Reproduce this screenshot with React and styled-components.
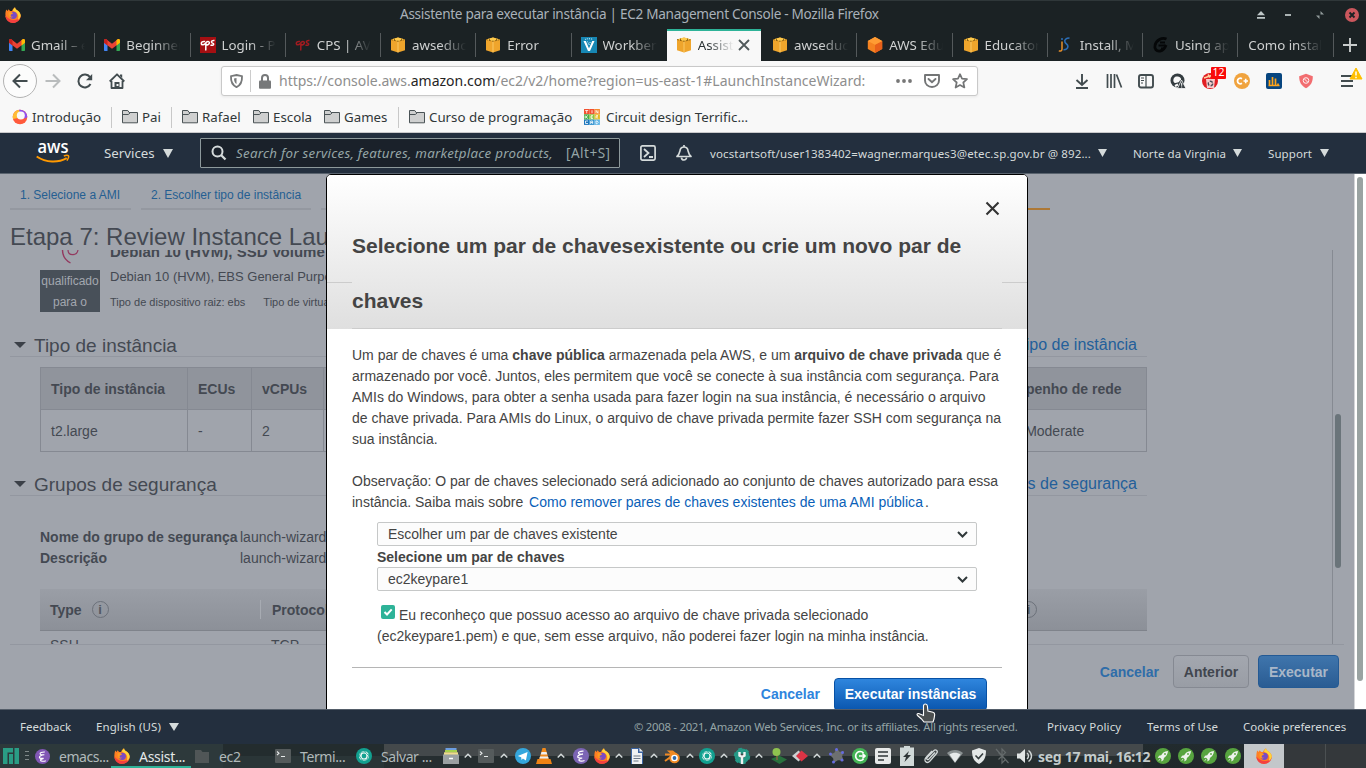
import React from "react";
import styled, { createGlobalStyle, css } from "styled-components";

const Global = createGlobalStyle`
  *, *::before, *::after { box-sizing: border-box; }
  html, body { margin: 0; padding: 0; overflow: hidden; }
  svg { display: block; overflow: visible; flex: none; }
`;

const ui = css`font-family: "Noto Sans", "Open Sans", sans-serif;`;
const sans = css`font-family: "Liberation Sans", Arial, sans-serif;`;

const Screen = styled.div`
  position: relative;
  width: 1366px;
  height: 768px;
  display: flex;
  flex-direction: column;
  overflow: hidden;
  white-space: nowrap;
  ${ui}
`;

/* Window title and tabs */
const TitleBar = styled.header`
  height: 29px;
  flex: none;
  display: flex;
  align-items: center;
  background: #1b2224;
  border-top: 1px solid #2f3739;
  padding-left: 5px;
`;
const WindowTitle = styled.h1`
  flex: none;
  margin: 0 0 0 379px;
  width: 852px;
  font-size: 13.6px;
  font-weight: 400;
  letter-spacing: -0.31px;
  line-height: 24px;
  padding-bottom: 2px;
  color: #a9b1b9;
`;
const TabStrip = styled.nav`
  height: 32px;
  flex: none;
  display: flex;
  background: #1b2224;
`;
const Tab = styled.div`
  width: 95.25px;
  height: 32px;
  flex: none;
  display: flex;
  align-items: center;
  padding: 0 0 0 ${(p) => p.$pl || 9}px;
  position: relative;
  color: ${(p) => (p.$active ? "#2b3335" : "#cfd1d1")};
  ${(p) =>
    p.$active
      ? css`width: 94.25px; margin-right: 1px; background: #f8f8f8; border-top: 2px solid #2eb398; padding-bottom: 2px;`
      : css`&::after { content: ""; position: absolute; right: 0; top: 4px; width: 1px; height: 24px; background: ${p.$sep ? "#54595b" : "transparent"}; }`}
`;
const TabLabel = styled.span`
  display: block;
  margin-left: ${(p) => (p.$bare ? 0 : 6)}px;
  width: ${(p) => p.$w || 54}px;
  overflow: hidden;
  font-size: 13.3px;
  line-height: 22px;
  mask-image: linear-gradient(90deg, #000 ${(p) => (p.$w || 54) - 26}px, transparent);
`;

/* Browser toolbar */
const NavBar = styled.div`
  height: 41px;
  flex: none;
  display: flex;
  align-items: center;
  padding-bottom: 1px;
  background: #f8f8f8;
`;
const Slot = styled.div`
  width: ${(p) => p.$w}px;
  margin-left: ${(p) => p.$ml || 0}px;
  margin-right: ${(p) => p.$mr || 0}px;
  flex: none;
  display: flex;
  align-items: center;
  justify-content: center;
  position: relative;
`;
const BackButton = styled.div`
  width: 34px;
  height: 34px;
  margin-left: 3px;
  flex: none;
  display: grid;
  place-items: center;
  border: 1px solid #b3b3b3;
  border-radius: 50%;
  background: #fcfcfc;
`;
const UrlBar = styled.div`
  width: 757px;
  height: 30px;
  margin-left: 88px;
  flex: none;
  display: flex;
  align-items: center;
  background: #fff;
  border: 1px solid #c9c9c9;
  border-radius: 3px;
  box-shadow: 0 1px 3px rgba(0, 0, 0, 0.07);
`;
const UrlDivider = styled.i`
  width: 1px;
  height: 22px;
  background: #ccc;
`;
const Url = styled.span`
  width: 611px;
  font-size: 14px;
  line-height: 18px;
  padding-bottom: 1px;
  letter-spacing: -0.005px;
  color: #8e8e8e;
  b { font-weight: 400; color: #252525; }
`;
const CounterBadge = styled.span`
  position: absolute;
  left: 17px;
  top: -6px;
  width: 15px;
  height: 12px;
  border-radius: 1px;
  background: #f90a0a;
  color: #fff;
  font-size: 10.5px;
  line-height: 11px;
  text-align: center;
`;
const WarningMark = styled.span`
  position: absolute;
  left: 25px;
  top: -5px;
`;
const ToolDivider = styled.i`
  width: 1px;
  height: 34px;
  background: #ccc;
  margin-left: 3px;
`;
const BookmarkBar = styled.div`
  height: 31px;
  flex: none;
  display: flex;
  align-items: center;
  padding-left: 12px;
  background: #f8f8f8;
  border-bottom: 1px solid #c9c9cb;
  color: #303739;
  font-size: 13.3px;
`;
const Bookmark = styled.div`
  width: ${(p) => p.$w}px;
  flex: none;
  display: flex;
  align-items: center;
  gap: ${(p) => p.$gap || 4}px;
`;
const BookmarkDivider = styled.i`
  width: 1px;
  height: 21px;
  flex: none;
  margin-right: 10px;
  margin-left: -1px;
  background: #c8c8c8;
`;

/* Console header */
const ConsoleBar = styled.header`
  height: 41px;
  flex: none;
  display: flex;
  align-items: center;
  background: #232f3e;
  border-bottom: 1px solid #59636e;
  color: #d5dbdb;
`;
const LogoBox = styled.div`
  width: 68px;
  margin-left: 36px;
  flex: none;
`;
const ConsoleItem = styled.div`
  width: ${(p) => p.$w}px;
  flex: none;
  display: flex;
  align-items: center;
  justify-content: space-between;
  margin-right: ${(p) => p.$mr || 0}px;
  font-size: ${(p) => p.$fs || 11.5}px;
  letter-spacing: ${(p) => p.$ls || 0}px;
`;
const SearchBox = styled.div`
  width: 420px;
  height: 30px;
  flex: none;
  display: flex;
  align-items: center;
  padding-left: 10px;
  background: #1a212a;
  border: 1px solid #8d999b;
  border-radius: 1px;
  color: #95a5a6;
`;
const Placeholder = styled.span`
  width: 339px;
  padding-left: 9px;
  font-style: italic;
  font-size: 13.3px;
  letter-spacing: 0.27px;
`;
const Shortcut = styled.span`
  font-size: 13.5px;
  letter-spacing: 0.5px;
`;

/* Console page behind the dialog */
const Viewport = styled.div`
  height: 535px;
  flex: none;
  display: flex;
  position: relative;
  overflow: hidden;
  ${sans}
`;
const Page = styled.main`
  width: 1354px;
  flex: none;
  display: flex;
  flex-direction: column;
  background: #a0a4ac;
  color: #444952;
`;
const PageScroll = styled.div`
  width: 12px;
  padding: 3px 0 0 2px;
  border-left: 1px solid #d4d5d8;
  background: #fff;
`;
const PageThumb = styled.div`
  width: 6px;
  height: 504px;
  border-radius: 3px;
  background: #9aa3a2;
`;
const Steps = styled.div`
  height: 36px;
  flex: none;
  display: flex;
  gap: 10px;
  padding-left: 10px;
`;
const Step = styled.div`
  width: ${(p) => p.$w}px;
  flex: none;
  height: 36px;
  padding: 13px 10px 0;
  border-bottom: 2px solid ${(p) => (p.$current ? "#ad7836" : "#9498a0")};
  color: #255f92;
  font-size: 12px;
  line-height: 16px;
`;
const PageTitle = styled.h2`
  height: 40px;
  flex: none;
  margin: 0;
  padding: 13px 0 0 10px;
  font-size: 24px;
  line-height: 28px;
  font-weight: 400;
`;
const ScrollArea = styled.section`
  height: 394px;
  flex: none;
  display: flex;
  margin-right: 10px;
  overflow: hidden;
`;
const ScrollBody = styled.div`
  width: 1333px;
  flex: none;
  padding-left: 10px;
  padding-right: 185px;
  border-right: 1px solid #868a92;
`;
const InnerThumb = styled.div`
  width: 6px;
  height: 154px;
  margin: 164px 0 0 2px;
  border-radius: 3px;
  background: #6a747a;
`;
const AmiRow = styled.div`
  height: 62px;
  display: flex;
  padding-left: 30px;
`;
const AmiBadges = styled.div`
  width: 70px;
  flex: none;
`;
const FreeTier = styled.div`
  width: 60px;
  height: 42px;
  margin-top: 20px;
  padding-top: 1px;
  background: #485059;
  color: #a3a7af;
  font-size: 12px;
  line-height: 21px;
  text-align: center;
`;
const SwirlHolder = styled.div`
  height: 0;
  padding-left: 21px;
`;
const AmiText = styled.div``;
const AmiName = styled.div`
  height: 14px;
  font-size: 15px;
  font-weight: 700;
  line-height: 18px;
  margin-top: -7px;
`;
const AmiDesc = styled.div`
  margin-top: 11px;
  font-size: 13px;
  line-height: 18px;
`;
const AmiMeta = styled.div`
  display: flex;
  gap: 18px;
  margin-top: 8px;
  font-size: 11px;
  line-height: 16px;
`;
const SectionHead = styled.div`
  height: ${(p) => p.$h}px;
  display: flex;
  align-items: flex-end;
  border-bottom: 1px solid #9397a0;
  padding-right: 10px;
`;
const SectionTitle = styled.h3`
  flex: 1;
  margin: 0 0 0 8px;
  font-size: 19px;
  line-height: 21px;
  font-weight: 400;
`;
const SectionLink = styled.a`
  font-size: 16px;
  line-height: 22px;
  color: #235f9a;
`;
const Caret = styled.i`
  margin: 0 0 8px 4px;
  border: 6px solid transparent;
  border-top: 6px solid #3b4048;
  border-bottom: 0;
`;
const TypeGrid = styled.div`
  display: grid;
  grid-template-columns: 147px 64px 72px 646px 1fr;
  margin: 10px 0 0 30px;
  height: 85px;
  border: 1px solid #858992;
  font-size: 14px;
`;
const TypeCell = styled.div`
  display: flex;
  align-items: center;
  padding-left: 10px;
  border-right: ${(p) => (p.$last ? "0" : "1px solid #858992")};
  ${(p) => p.$head && css`background: #90949c; font-weight: 700; border-bottom: 1px solid #858992;`}
`;
const GroupInfo = styled.dl`
  display: grid;
  grid-template-columns: 200px 1fr;
  margin: 31px 0 20px 30px;
  font-size: 14px;
  line-height: 21px;
  dt { font-weight: 700; }
  dd { margin: 0; }
`;
const RuleHead = styled.div`
  display: flex;
  align-items: center;
  height: 42px;
  margin: 0 0 0 30px;
  background: linear-gradient(#9a9ea6, #8c9098);
  border-bottom: 1px solid #7f838b;
  font-size: 14px;
  font-weight: 700;
`;
const RuleCell = styled.div`
  width: ${(p) => p.$w}px;
  height: 19px;
  display: flex;
  align-items: center;
  gap: ${(p) => p.$gap || 10}px;
  padding-left: ${(p) => p.$pl || 10}px;
  border-right: ${(p) => (p.$last ? "0" : "1px solid #a7abb2")};
`;
const RuleRow = styled.div`
  display: flex;
  margin-left: 40px;
  padding-top: 6px;
  font-size: 14px;
  line-height: 17px;
  span:first-child { width: 221px; }
`;
const InfoDot = styled.i`
  width: 17px;
  height: 17px;
  border: 1px solid #6c717a;
  border-radius: 50%;
  font: 700 13px/15px "Liberation Sans", sans-serif;
  text-align: center;
  color: #535861;
`;
const PageActions = styled.div`
  height: 65px;
  flex: none;
  display: flex;
  align-items: flex-start;
  justify-content: flex-end;
  margin: 0 10px;
  padding: 10px 5px 0 0;
  border-top: 1px solid #9397a0;
  font-size: 14px;
  font-weight: 700;
`;
const ActionLink = styled.a`
  line-height: 33px;
  padding-top: ${(p) => p.$pt || 0}px;
  color: ${(p) => p.$color};
  margin-right: 14px;
`;
const ActionButton = styled.button`
  ${sans}
  height: 33px;
  width: ${(p) => p.$w}px;
  padding: 1px 0 0;
  border-radius: 4px;
  font-size: 14px;
  font-weight: 700;
  ${(p) =>
    p.$primary
      ? css`margin-left: 9px; color: #a9b7c8; background: linear-gradient(#3f75ac, #2a5c93); border: 1px solid #245a94;`
      : css`color: #41464e; background: linear-gradient(#a3a7af, #999da5); border: 1px solid #858992;`}
`;

/* Dialog */
const Dialog = styled.section`
  position: absolute;
  left: 326px;
  top: 0;
  width: 702px;
  height: 560px;
  border: 1px solid #000;
  border-radius: 5px 5px 0 0;
  background: #fff;
  overflow: hidden;
  color: #444;
  font-size: 14px;
  line-height: 21px;
`;
const DialogHead = styled.div`
  height: 154px;
  padding: 27px 25px 0;
  background: linear-gradient(90deg, #ccc 25px, transparent 25px, transparent 675px, #ccc 675px) 0 107px / 100% 1px no-repeat,
    linear-gradient(#fff, #dfdfdf);
`;
const CloseRow = styled.div`
  height: 16px;
  display: flex;
  justify-content: flex-end;
  padding-right: 3px;
`;
const DialogTitle = styled.h2`
  margin: 0;
  height: 111px;
  font-size: 21px;
  line-height: 55px;
  font-weight: 700;
  border-bottom: 1px solid #ccc;
`;
const DialogBody = styled.div`
  padding: 16px 25px 0;
`;
const Para = styled.p`
  margin: 0;
  height: ${(p) => p.$h}px;
`;
const TextLink = styled.a`
  color: #0a5fb8;
  margin: 0 2px;
  letter-spacing: 0.015px;
`;
const Form = styled.div`
  width: 600px;
  margin: 9px 0 0 25px;
`;
const Select = styled.div`
  height: 24px;
  display: flex;
  align-items: center;
  justify-content: space-between;
  padding: 0 8px 0 10px;
  background: #fcfcfc;
  border: 1px solid #c6c8c8;
  border-radius: 2px;
`;
const FieldLabel = styled.div`
  height: 21px;
  padding-top: 1px;
  font-weight: 700;
`;
const Ack = styled.div`
  margin-top: 14px;
`;
const AckLine = styled.div`
  display: flex;
  align-items: flex-start;
`;
const Check = styled.span`
  width: 14px;
  height: 14px;
  margin: 0 4px;
  display: grid;
  place-items: center;
  border-radius: 2px;
  background: #2eb398;
`;
const DialogActions = styled.div`
  display: flex;
  margin-top: 20px;
  padding: 10px 15px 0 0;
  justify-content: flex-end;
  border-top: 1px solid #b5b5b5;
  font-weight: 700;
`;
const LaunchButton = styled.button`
  ${sans}
  width: 153px;
  height: 33px;
  padding: 0 0 2px;
  color: #fff;
  font-size: 14px;
  font-weight: 700;
  border: 1px solid #0751a5;
  border-radius: 4px;
  background: linear-gradient(#2f86de, #0a56ae);
`;

/* Console footer and desktop panel */
const Footer = styled.footer`
  height: 35px;
  flex: none;
  display: flex;
  align-items: center;
  padding: 0 0 0 20px;
  background: #232f3e;
  border-top: 1px solid #545d69;
  color: #d5dbdb;
`;
const FootItem = styled.span`
  width: ${(p) => p.$w}px;
  flex: none;
  display: flex;
  align-items: center;
  gap: 8px;
  line-height: 16px;
  padding-bottom: 1px;
  font-size: ${(p) => p.$fs || 11.5}px;
  letter-spacing: ${(p) => p.$ls || 0}px;
  color: ${(p) => p.$color || "inherit"};
`;
const Panel = styled.div`
  height: 24px;
  flex: none;
  display: flex;
  align-items: center;
  background:
    linear-gradient(#34383b, #34383b) 1284px 0 / 82px 24px no-repeat,
    linear-gradient(#222b2e, #20282a) 1143px 0 / 101px 24px no-repeat,
    linear-gradient(#44494b 12px, #262e30 12px) 384px 0 / 759px 24px no-repeat,
    linear-gradient(#232c2e 12px, #2a3537 12px) 223px 0 / 161px 24px no-repeat,
    #2d393b;
`;
const Task = styled.div`
  width: ${(p) => p.$w}px;
  height: 24px;
  flex: none;
  display: flex;
  align-items: center;
  padding-left: ${(p) => p.$pl || 0}px;
  color: ${(p) => (p.$active ? "#e4e8e8" : "#b1b9ba")};
  ${(p) => p.$active && css`box-shadow: inset 0 -2px #2eb398;`}
`;
const TaskName = styled.span`
  margin-left: ${(p) => p.$ml || 7}px;
  padding-top: 2px;
  font-size: 14px;
  line-height: 22px;
  letter-spacing: ${(p) => p.$ls || 0}px;
`;
const Clock = styled.span`
  width: 117px;
  padding: 1px 0 0 4px;
  flex: none;
  font-size: 14px;
  font-weight: 700;
  letter-spacing: -0.3px;
  color: #c3cbcb;
`;
const Desktop = styled.div`
  width: ${(p) => p.$w}px;
  height: 24px;
  flex: none;
  display: grid;
  place-items: center;
  background: ${(p) => (p.$active ? "#c3c7ca" : "transparent")};
  border-right: ${(p) => (p.$active ? "0" : "1px solid #4b5052")};
`;
const Pointer = styled.div`
  position: absolute;
  left: 916px;
  top: 703px;
`;

/* Icons */
const Svg = ({ s = 16, w, h, vb = "0 0 16 16", children, ...rest }) => (
  <svg width={w || s} height={h || s} viewBox={vb} fill="none" {...rest}>{children}</svg>
);
const Firefox = ({ s = 16 }) => (
  <Svg s={s}>
    <path d="M1.200 2.600 2.600 4l1-1.800 1.500 1.900L7 4l1-2 2-1.800c.3 1.300.6 1.800 1.400 2.500 2 .9 4.300 3 4.300 6A7.700 7.700 0 1 1 .4 7c.1-1.600.3-2.600.8-4.400z" fill="#ff7f22" />
    <path d="M.4 8.500C.5 13 4 16 8 16s7.500-3 7.700-7.300c-1 2.400-3.500 4.200-6.600 4.200C5 12.900 3 11.500.4 8.500z" fill="#f4403f" />
    <path d="M10 .2c.3 1.300.6 1.800 1.400 2.500 2.800 1.300 4.300 3.800 4.300 6.200-.5 2-1.500 3.300-3 4 1-2.200 1-5-.7-6.700C10.300 4.500 8.500 4.500 8 3.600 8.200 2 9.200 1 10 .2z" fill="#ffd53a" />
    <circle cx="8.300" cy="8.300" r="3.600" fill="#7a4bc4" />
    <path d="M3.500 5.500c1.500-.8 3.300-.3 4.700.7-1 .9-2.300.9-2.500 2-.2 1.300 1 1.700 2.300 1.400-1 1.300-3.300 1.100-4.100-.5-.4-1-.5-2-.4-3.600z" fill="#ff9a1f" />
  </Svg>
);
const Gmail = () => (
  <Svg><path d="M0 3.500V13c0 .7.400 1 1 1h2.500V7z" fill="#4285f4" /><path d="M16 3.500V13c0 .7-.4 1-1 1h-2.500V7z" fill="#34a853" /><path d="M0 3.500C0 2 1.500 1.500 2.600 2.400L8 6.700l5.400-4.300C14.500 1.500 16 2 16 3.500v2.200L8 11.800 0 5.700z" fill="#ea4335" /><path d="M12.500 3.100l.9-.7C14.500 1.500 16 2 16 3.500v2.200l-3.500 2.700z" fill="#fbbc04" /><path d="M0 3.500v2.200l3.500 2.700V3.100l-.9-.7C1.500 1.500 0 2 0 3.500z" fill="#c5221f" /></Svg>
);
const Cps = ({ boxed }) => (
  <Svg>
    {boxed && <rect width="16" height="16" fill="#a50f12" />}
    <path d="M5 4.500C2.500 4 1.200 5.200 1.300 6.600c.1 1.600 2.500 1.500 4-.2M6 5c-.4 2 0 5-.3 8.500M6 5.500c2-1.800 3.800-.8 3.300.8S7 8.200 6.200 7.500M14.500 3.600c-2-.4-3.400.6-3 1.700.4 1 2.300.8 2.200 2-.1 1.300-2.100 1.300-3.200.5" stroke={boxed ? "#fff" : "#a21b20"} strokeWidth="1.500" />
  </Svg>
);
const Cube = () => (
  <Svg><path d="M1 2.500 8 .6l7 1.900v10.800L8 15.500l-7-2.200z" fill="#efa52c" /><path d="M1 2.500 8 .6l7 1.900-7 1.800z" fill="#ffcb4c" /><path d="M8 4.300v11.200" stroke="#ffd374" strokeWidth=".8" /><path d="M1 2.500l7 1.800 7-1.800M4.500 1.500v2M11.500 1.500v2" stroke="#6f4505" strokeWidth=".7" strokeDasharray="2 1" /></Svg>
);
const Hex = () => (
  <Svg><path d="M8 0l7.200 4v8L8 16 .8 12V4z" fill="#f58220" /><path d="M8 7.800 15.200 4v8L8 16z" fill="#e8601a" /><path d="M8 0l7.200 4L8 7.800.8 4z" fill="#ff9c33" /></Svg>
);
const Voc = () => (
  <Svg><rect width="16" height="16" fill="#1787b4" /><path d="M2.500 4h2.300L8 11.500 11.200 4h2.300L9 14H7z" fill="#fff" /><path d="M4 2.500c2-1 6-1 8 0M6.500 4.500 8 8l1.500-3.500" stroke="#d8eff8" strokeDasharray="1 1" /></Svg>
);
const Js = () => (
  <Svg><path d="M4 4.500V12c0 1.800-1.200 2.300-3.200 2" stroke="#e8902a" strokeWidth="1.500" /><circle cx="4" cy="2" r="1" fill="#2c6fb8" /><path d="M11.500 1C8 1 6 3 7 5.200c.8 1.800 3 2.200 2.900 4.300C9.800 11.500 8 13 5.500 12.800" stroke="#2c6fb8" strokeWidth="1.600" /></Svg>
);
const Swoosh = () => (
  <Svg><path d="M13.500 2C9 0 3 3 2 8.500c-.8 3.500 1.500 6 5 5.500 3-.5 5-3 6-6" stroke="#050708" strokeWidth="2.800" /><path d="M5.500 8.500h7M7 5.500h5M8 11.500h4" stroke="#050708" strokeWidth="2" /></Svg>
);
const Folder = () => (
  <Svg><path d="M.5 13.800V1.500h5.300l1.300 2h8.400v10.300z" fill="#cfd0d0" stroke="#4a5356" /><path d="M.5 5.500h5.800L8 4" stroke="#4a5356" /></Svg>
);
const Tinker = () => {
  const tiles = ["#f25130", "#f25130", "#f78a2d", "#47ae45", "#8cc63f", "#e5b91e", "#1c75bc", "#2d8fce", "#5fb4e6"];
  return (
    <Svg>
      {tiles.map((c, i) => <rect key={i} x={(i % 3) * 5.3} y={Math.floor(i / 3) * 5.3} width="5.300" height="5.300" fill={c} />)}
      <path d="M1.200 1.500h3M2.700 1.500v2.800M8 1.200v3M12 4.300v-3l2 3v-3M1.200 6.500v3M3.800 6.500l-2 1.500 2 1.500M9 6.700H7v2.700h2M7 8h1.500M12 9.500V6.700h2L12.500 8l1.700 1.500M4 12H1.500v2.500H4M6.700 15v-3h2v3M6.700 13.500h2M12 12v2.700h1.200l1-1.300-1-1.400z" stroke="#fff" strokeWidth=".8" />
    </Svg>
  );
};
const Triangle = ({ w = 10, h = 8 }) => <Svg w={w} h={h} vb="0 0 10 8" preserveAspectRatio="none"><path d="M0 0h10L5 8z" fill="#d5dbdb" /></Svg>;
const Up = () => <Svg w={8} h={6} vb="0 0 8 6"><path d="M.7 4.500 4 1.300l3.300 3.200" stroke="#d4dada" strokeWidth="1.500" /></Svg>;
const Emacs = ({ s = 16, color = "#7c65b5" }) => (
  <Svg s={s}><circle cx="8" cy="8" r="8" fill={color} /><path d="M10.500 3.200C7 3 5 4.200 5.500 5.300c.4 1 2.500 1 4.500.9-3 .3-5.500 1.300-5.300 2.700.2 1.300 3 1.200 4.500 1.100-2 .5-3.500 1-3.300 2 .3 1.200 3.300 1.500 5.600.5" stroke="#fff" strokeWidth="1.200" /></Svg>
);
const Term = () => (
  <Svg><rect y="1" width="16" height="14" rx="1" fill="#555b5c" /><path d="M2 3.500 4 5.300 2 7M6 8.500h4" stroke="#e6e9e9" strokeWidth="1.100" /></Svg>
);
const Shutter = () => (
  <Svg><circle cx="8" cy="8" r="8" fill="#12a190" /><circle cx="8" cy="8" r="3.700" stroke="#e9f6f4" strokeWidth="2.600" /><path d="M8 2.500 12 7M13 6l-2 5.500M12 12H6M6.500 13 4 8.500M3 9l2-5.200M4.500 4H10" stroke="#12a190" strokeWidth=".8" /></Svg>
);
const Rocket = () => (
  <Svg><circle cx="8" cy="8" r="8" fill="#57a43f" /><path d="M13 3C9 3.300 7 5.500 6.200 7.300L4 7.800 2.800 10l2.300-.3 1.500 1.500L6.300 13.400 8.500 12l.4-2C11 8.500 12.800 6.500 13 3zM4.700 11 3 13.200 5.300 11.800z" fill="#eef3ed" /><circle cx="10" cy="6" r=".9" fill="#57a43f" /></Svg>
);

const tabs = [
  ["Gmail – e", <Gmail />], ["Beginner", <Gmail />], ["Login - P", <Cps boxed />], ["CPS | AVA", <Cps />],
  ["awseduca", <Cube />], ["Error", <Cube />], ["Workbenc", <Voc />], ["Assiste", <Cube />], ["awseduca", <Cube />],
  ["AWS Educ", <Hex />], ["Educator", <Cube />], ["Install, M", <Js />], ["Using app", <Swoosh />], ["Como instalar", null],
];

const CloseTab = styled.span`
  margin-left: 5px;
`;

function Browser() {
  return (
    <>
      <TitleBar>
        <Firefox />
        <WindowTitle>Assistente para executar instância | EC2 Management Console - Mozilla Firefox</WindowTitle>
        <Slot $w={18}><Svg w={8} h={8} vb="0 0 8 8"><path d="M4 0l4 4.300H0zM0 6h8v1.700H0z" fill="#bfc8c8" /></Svg></Slot>
        <Slot $w={36}><Svg w={6} h={2} vb="0 0 6 2"><path d="M0 0h6v2H0z" fill="#aab2b2" /></Svg></Slot>
        <Slot $w={28}><Svg w={8} h={8} vb="0 0 8 8"><path d="M4.500 0v3.500H8zM3.500 8V4.500H0z" fill="#929b9b" /></Svg></Slot>
        <Slot $w={36}><Svg s={14} vb="0 0 14 14"><circle cx="7" cy="7" r="7" fill="#cb575d" /><path d="M4.500 4.500l5 5m0-5-5 5" stroke="#1b2224" strokeWidth="1.900" /></Svg></Slot>
      </TitleBar>
      <TabStrip>
        {tabs.map(([name, icon], i) => (
          <Tab key={i} $active={i === 7} $sep={i !== 6} $pl={i > 7 ? 10 : 9}>
            {icon}
            <TabLabel $bare={!icon} $w={i === 13 ? 74 : i === 7 ? 36 : 54}>{name}</TabLabel>
            {i === 7 && <CloseTab><Svg s={10} vb="0 0 10 10"><path d="M0 0l10 10M10 0 0 10" stroke="#50595b" strokeWidth="1.800" /></Svg></CloseTab>}
          </Tab>
        ))}
        <Slot $w={32}><Svg s={14} vb="0 0 14 14"><path d="M7 0v14M0 7h14" stroke="#c9cccc" strokeWidth="1.900" /></Svg></Slot>
      </TabStrip>
      <NavBar>
        <BackButton><Svg><path d="M15.500 8H1.500M8 1.500 1.500 8 8 14.500" stroke="#424c4f" strokeWidth="2" /></Svg></BackButton>
        <Slot $w={32}><Svg><path d="M.5 8h14M8 1.500 14.500 8 8 14.500" stroke="#b9bcbd" strokeWidth="2" /></Svg></Slot>
        <Slot $w={32}><Svg><path d="M13 4.200A6.400 6.400 0 1 0 13.500 11" stroke="#424c4f" strokeWidth="2" /><path d="M15.200 1v6.300H9z" fill="#424c4f" /></Svg></Slot>
        <Slot $w={32}><Svg><path d="M.7 8.500 8 1.300l7.300 7.200M2.500 8v7h11V8" stroke="#424c4f" strokeWidth="1.800" strokeLinejoin="round" /><path d="M5.500 15V9h5v6zM11 1.500h2.200V5L11 3z" fill="#424c4f" /><path d="M7.500 11h2v2h-2z" fill="#f8f8f8" /></Svg></Slot>
        <UrlBar>
          <Slot $w={28}><Svg w={13} h={14} vb="0 0 13 14"><path d="M6.500 1 12 2.200c.3 5.500-1.500 9-5.500 10.900C2.500 11.200.7 7.700 1 2.200z" stroke="#77797a" strokeWidth="1.800" /><path d="M6.500 4v6C4.500 8.800 4 6.700 4 4.500z" fill="#77797a" /></Svg></Slot>
          <UrlDivider />
          <Slot $w={28}><Svg w={12} h={15} vb="0 0 12 15"><path d="M3 7V4a3 3 0 0 1 6 0v3" stroke="#77797a" strokeWidth="2" /><rect y="6.500" width="12" height="8.200" rx="1" fill="#77797a" /></Svg></Slot>
          <Url>https://console.aws.<b>amazon.com</b>/ec2/v2/home?region=us-east-1#LaunchInstanceWizard:</Url>
          <Slot $w={34}><Svg w={16} h={4} vb="0 0 16 4"><circle cx="2" cy="2" r="1.900" fill="#777" /><circle cx="8" cy="2" r="1.900" fill="#777" /><circle cx="14" cy="2" r="1.900" fill="#777" /></Svg></Slot>
          <Slot $w={22}><Svg><path d="M1 2h14v5.500a7 6.500 0 0 1-14 0z" stroke="#737576" strokeWidth="1.900" strokeLinejoin="round" /><path d="M4.500 6 8 9.300 11.500 6" stroke="#737576" strokeWidth="1.900" strokeLinecap="round" /></Svg></Slot>
          <Slot $w={34}><Svg><path d="M8 1.200l2 4.500 5 .5-3.700 3.300 1.100 5L8 12l-4.400 2.500 1.100-5L1 6.200l5-.5z" stroke="#737576" strokeWidth="1.700" strokeLinejoin="round" /></Svg></Slot>
        </UrlBar>
        <Slot $w={32} $ml={88}><Svg><path d="M8 1v11M2.500 7 8 12l5.500-5M2 15h12" stroke="#424c4f" strokeWidth="1.900" /></Svg></Slot>
        <Slot $w={32}><Svg><path d="M1.500 1v14M5 1v14M8.500 1v14M10.500 1.500l5 13" stroke="#424c4f" strokeWidth="1.700" /></Svg></Slot>
        <Slot $w={32}><Svg><rect x="1" y="2" width="14" height="12.500" rx="2" stroke="#424c4f" strokeWidth="1.900" /><path d="M8 2v12.500M3 5h3M3 7.500h3M3 10h2" stroke="#424c4f" strokeWidth="1.200" /></Svg></Slot>
        <Slot $w={32}><Svg><circle cx="7.500" cy="7.500" r="7" fill="#343c40" /><path d="M3.500 8.500c-.5-3 1-5 3.500-5s4.500 1.500 4 3.500c-2 .5-1.500 2.500-3.500 2.500C6 9.500 5 11 3.500 8.500z" fill="#f8f8f8" /><path d="M5 13l3-1.500" stroke="#f8f8f8" strokeWidth="2" /><path d="M11.500 7 16 15.500H7.500z" fill="#343c40" stroke="#f8f8f8" strokeWidth=".8" /><path d="M11.700 9.800v3M11.700 13.500v1" stroke="#fff" /></Svg></Slot>
        <Slot $w={32}><Svg><circle cx="8" cy="8" r="8" fill="#e11e23" /><path d="M2 5l9-3M6 1.500l2 3" stroke="#ffd4a0" strokeWidth="1.500" /><path d="M4 6h9l-1 9H5z" fill="#f7caca" /><circle cx="8.500" cy="10.500" r="2.200" stroke="#4d4d58" strokeWidth="1.400" strokeDasharray="3 1.300" /></Svg><CounterBadge>12</CounterBadge></Slot>
        <Slot $w={32}><Svg><circle cx="8" cy="8" r="8" fill="#f0a33e" /><path d="M8 5.700C6 4.500 3.500 5.700 3.500 8S6 11.500 8 10.300" stroke="#fff" strokeWidth="1.800" /><path d="M9.500 8h4.500M11.700 5.700v4.600" stroke="#fff" strokeWidth="1.600" /></Svg></Slot>
        <Slot $w={32}><Svg><rect width="16" height="16" rx="2" fill="#07457f" /><path d="M3.500 12V7M6.500 12V4M9.500 12V5.500M12 12v-1.500M2.500 12.500h11" stroke="#ffa51c" strokeWidth="1.700" /></Svg></Slot>
        <Slot $w={32}><Svg><path d="M8 .8l6.800 2.500c.2 5.500-2 9.500-6.800 12C3.200 12.800 1 8.800 1.200 3.300z" fill="#f26d70" /><circle cx="8" cy="7.500" r="2.800" stroke="#fff" strokeWidth=".9" /><path d="M6.500 6l3 3" stroke="#fff" strokeWidth=".9" /></Svg></Slot>
        <ToolDivider />
        <Slot $w={44}><Svg><path d="M2 3h12M2 8h12M2 13h12" stroke="#424c4f" strokeWidth="1.900" /></Svg>
          <WarningMark><Svg s={12} vb="0 0 12 12"><path d="M6 0l6 11H0z" fill="#ffbf00" stroke="#ffbf00" strokeLinejoin="round" /><path d="M6 3.500V7.500M6 8.800v1.500" stroke="#fff" strokeWidth="1.500" /></Svg></WarningMark>
        </Slot>
      </NavBar>
      <BookmarkBar>
        <Bookmark $w={100}><Svg><circle cx="8" cy="8" r="7.300" fill="#ff5a3c" /><path d="M1 10a7.300 7.300 0 0 1 6-9.200L10 4 6 9z" fill="#ffbd35" /><path d="M7 .8a7.300 7.300 0 0 1 8.300 7c-2 3-5 2-7.300-4z" fill="#8f4ff0" /><circle cx="8.800" cy="6.500" r="4" fill="#f8f8f8" /></Svg>Introdução</Bookmark>
        <BookmarkDivider />
        <Bookmark $w={50}><Folder />Pai</Bookmark>
        <BookmarkDivider />
        <Bookmark $w={71}><Folder />Rafael</Bookmark>
        <Bookmark $w={71}><Folder />Escola</Bookmark>
        <Bookmark $w={75}><Folder />Games</Bookmark>
        <BookmarkDivider />
        <Bookmark $w={175}><Folder />Curso de programação</Bookmark>
        <Bookmark $w={180} $gap={6}><Tinker />Circuit design Terrific...</Bookmark>
      </BookmarkBar>
    </>
  );
}

function ConsoleHeader() {
  return (
    <ConsoleBar>
      <LogoBox>
        <Svg w={34} h={22} vb="0 0 34 22">
          <text x="1.500" y="11" textLength="31" lengthAdjust="spacingAndGlyphs" fontFamily="Open Sans, sans-serif" fontSize="18.500" fontWeight="600" fill="#fff">aws</text>
          <path d="M.7 14.500c9.500 6.500 21.500 6.500 30 1.700" stroke="#ff9900" strokeWidth="2" />
          <path d="M27.800 14c2-.7 4-.8 4.600-.2.500.7-.2 3-1.500 4.800" stroke="#ff9900" strokeWidth="1.500" />
        </Svg>
      </LogoBox>
      <ConsoleItem $w={69} $mr={27} $fs={13.3}>Services<Triangle w={10} h={9} /></ConsoleItem>
      <SearchBox>
        <Svg><circle cx="6.500" cy="6.500" r="5" stroke="#d5dbdb" strokeWidth="2" /><path d="M10 10l4.500 4.500" stroke="#d5dbdb" strokeWidth="2.300" /></Svg>
        <Placeholder>Search for services, features, marketplace products,</Placeholder>
        <Shortcut>[Alt+S]</Shortcut>
      </SearchBox>
      <Slot $w={56}><Svg><rect x=".9" y=".9" width="14.200" height="14.200" rx="1.500" stroke="#d5dbdb" strokeWidth="1.700" /><path d="M4 4l4.500 4L4 12M9 12h4" stroke="#d5dbdb" strokeWidth="1.800" /></Svg></Slot>
      <Slot $w={16} $mr={18}><Svg><path d="M8 0v2M1 11.500C3.500 9.500 3.500 7 4 5.500 4.500 3 6 2 8 2s3.500 1 4 3.500c.5 1.500.5 4 3 6z" stroke="#d5dbdb" strokeWidth="1.700" strokeLinejoin="round" /><path d="M5.500 12.500a2.500 2.500 0 0 0 5 0" stroke="#d5dbdb" strokeWidth="1.700" /></Svg></Slot>
      <ConsoleItem $w={397} $mr={26} $ls={0.135}>vocstartsoft/user1383402=wagner.marques3@etec.sp.gov.br @ 892...<Triangle w={9} h={8} /></ConsoleItem>
      <ConsoleItem $w={109} $mr={26} $ls={0.08}>Norte da Virgínia<Triangle w={9} h={8} /></ConsoleItem>
      <ConsoleItem $w={61} $ls={0.1}>Support<Triangle w={9} h={8} /></ConsoleItem>
    </ConsoleBar>
  );
}

function WizardPage() {
  return (
    <Page>
      <Steps><Step $w={121}>1. Selecione a AMI</Step><Step $w={170}>2. Escolher tipo de instância</Step><Step $w={300} /><Step $w={419} $current /></Steps>
      <PageTitle>Etapa 7: Review Instance Launch</PageTitle>
      <ScrollArea>
        <ScrollBody>
          <AmiRow>
            <AmiBadges>
              <SwirlHolder><Svg w={20} h={13} vb="0 0 20 13"><path d="M1.500 0c0 5 2.500 10 8 13" stroke="#93395f" strokeWidth="1.400" /><path d="M7 0c0 6 9 6.500 10 0" stroke="#93395f" strokeWidth="1.200" /></Svg></SwirlHolder>
              <FreeTier>qualificado<br />para o</FreeTier>
            </AmiBadges>
            <AmiText>
              <AmiName>Debian 10 (HVM), SSD Volume Type</AmiName>
              <AmiDesc>Debian 10 (HVM), EBS General Purpose (SSD) Volume Type</AmiDesc>
              <AmiMeta><span>Tipo de dispositivo raiz: ebs</span><span>Tipo de virtualização: hvm</span></AmiMeta>
            </AmiText>
          </AmiRow>
          <SectionHead $h={45}><Caret /><SectionTitle>Tipo de instância</SectionTitle><SectionLink>Editar tipo de instância</SectionLink></SectionHead>
          <TypeGrid>
            <TypeCell $head>Tipo de instância</TypeCell><TypeCell $head>ECUs</TypeCell><TypeCell $head>vCPUs</TypeCell><TypeCell $head>Memória (GiB)</TypeCell><TypeCell $head $last>Desempenho de rede</TypeCell>
            <TypeCell>t2.large</TypeCell><TypeCell>-</TypeCell><TypeCell>2</TypeCell><TypeCell>8</TypeCell><TypeCell $last>Low to Moderate</TypeCell>
          </TypeGrid>
          <SectionHead $h={44}><Caret /><SectionTitle>Grupos de segurança</SectionTitle><SectionLink>Editar grupos de segurança</SectionLink></SectionHead>
          <GroupInfo><dt>Nome do grupo de segurança</dt><dd>launch-wizard-1</dd><dt>Descrição</dt><dd>launch-wizard-1 created</dd></GroupInfo>
          <RuleHead>
            <RuleCell $w={221}>Type <InfoDot>i</InfoDot></RuleCell>
            <RuleCell $w={641} $pl={11}>Protocol <InfoDot>i</InfoDot></RuleCell>
            <RuleCell $w={245} $last $pl={40} $gap={1}>Description <InfoDot>i</InfoDot></RuleCell>
          </RuleHead>
          <RuleRow><span>SSH</span><span>TCP</span></RuleRow>
        </ScrollBody>
        <InnerThumb />
      </ScrollArea>
      <PageActions><ActionLink $pt={1} $color="#2f6da9">Cancelar</ActionLink><ActionButton $w={76}>Anterior</ActionButton><ActionButton $w={81} $primary>Executar</ActionButton></PageActions>
    </Page>
  );
}

const Arrow = () => <Svg w={11} h={7} vb="0 0 11 7"><path d="M1 1l4.500 4.500L10 1" stroke="#30383a" strokeWidth="2" /></Svg>;

function KeyPairDialog() {
  return (
    <Dialog>
      <DialogHead>
        <CloseRow><Svg s={13} vb="0 0 13 13"><path d="M.5.5l12 12m0-12-12 12" stroke="#333" strokeWidth="2.100" /></Svg></CloseRow>
        <DialogTitle>Selecione um par de chavesexistente ou crie um novo par de<br />chaves</DialogTitle>
      </DialogHead>
      <DialogBody>
        <Para $h={126}>
          Um par de chaves é uma <b>chave pública</b> armazenada pela AWS, e um <b>arquivo de chave privada</b> que é<br />
          armazenado por você. Juntos, eles permitem que você se conecte à sua instância com segurança. Para<br />
          AMIs do Windows, para obter a senha usada para fazer login na sua instância, é necessário o arquivo<br />
          de chave privada. Para AMIs do Linux, o arquivo de chave privada permite fazer SSH com segurança na<br />
          sua instância.
        </Para>
        <Para $h={42}>
          Observação: O par de chaves selecionado será adicionado ao conjunto de chaves autorizado para essa<br />
          instância. Saiba mais sobre <TextLink>Como remover pares de chaves existentes de uma AMI pública</TextLink>.
        </Para>
        <Form>
          <Select>Escolher um par de chaves existente<Arrow /></Select>
          <FieldLabel>Selecione um par de chaves</FieldLabel>
          <Select>ec2keypare1<Arrow /></Select>
          <Ack>
            <AckLine><Check><Svg s={10} vb="0 0 10 10"><path d="M1.500 5 4 7.500 8.700 2.300" stroke="#fff" strokeWidth="2" /></Svg></Check>Eu reconheço que possuo acesso ao arquivo de chave privada selecionado</AckLine>
            <AckLine>(ec2keypare1.pem) e que, sem esse arquivo, não poderei fazer login na minha instância.</AckLine>
          </Ack>
        </Form>
        <DialogActions><ActionLink $color="#2e84dd">Cancelar</ActionLink><LaunchButton>Executar instâncias</LaunchButton></DialogActions>
      </DialogBody>
    </Dialog>
  );
}

function ConsoleFooter() {
  return (
    <Footer>
      <FootItem $w={76}>Feedback</FootItem>
      <FootItem $w={538} $ls={0.1}>English (US)<Triangle /></FootItem>
      <FootItem $w={413} $color="#95a5a6" $fs={11.3} $ls={-0.25}>© 2008 - 2021, Amazon Web Services, Inc. or its affiliates. All rights reserved.</FootItem>
      <FootItem $w={100} $ls={0.12}>Privacy Policy</FootItem>
      <FootItem $w={96} $ls={0.05}>Terms of Use</FootItem>
      <FootItem $w={110} $ls={-0.04}>Cookie preferences</FootItem>
    </Footer>
  );
}

function DesktopPanel() {
  return (
    <Panel>
      <Slot $w={22}><Svg><path d="M0 0h10v4.500H4.500V16H0zM6 6h4v10H6zM11.500 0H16v16h-4.500z" fill="#2a9d85" /></Svg></Slot>
      <Slot $w={10}><Svg w={4} h={10} vb="0 0 4 10"><path d="M0 .5h4M0 4.500h4M0 8.500h4" stroke="#7f8888" /></Svg></Slot>
      <Task $w={79}><Slot $w={20}><Emacs s={15} color="#8157b5" /></Slot><TaskName $ls={-0.45}>emacs...</TaskName></Task>
      <Task $w={80} $active><Slot $w={22}><Firefox /></Slot><TaskName $ml={6} $ls={-0.3}>Assist...</TaskName></Task>
      <Task $w={82} $pl={1}><Slot $w={20}><Svg w={14} h={13} vb="0 0 14 13"><path d="M0 0h6l1.500 2H14v11H0z" fill="#505657" /></Svg></Slot><TaskName $ls={-0.3}>ec2</TaskName></Task>
      <Task $w={81}><Slot $w={20}><Term /></Slot><TaskName $ls={-0.4}>Termi...</TaskName></Task>
      <Task $w={87}><Slot $w={20}><Shutter /></Slot><TaskName $ls={-0.4}>Salvar ...</TaskName></Task>
      <Slot $w={20}><Svg><path d="M2.500 0h11v2h-11z" fill="#6d9ee0" /><path d="M2 2h12v2.500H2z" fill="#a6d14d" /><path d="M1 4.300h14V7H1z" fill="#f0dc8c" /><path d="M0 6.500h16V16H0z" fill="#9ba0a2" /><path d="M6 10.500h4" stroke="#fff" strokeWidth="1.500" /></Svg></Slot>
      <Slot $w={14}><Up /></Slot>
      <Slot $w={22}><Term /></Slot>
      <Slot $w={13}><Up /></Slot>
      <Slot $w={26}><Svg><circle cx="8" cy="8" r="8" fill="#35a7dd" /><path d="M2.800 8 12.600 4l-1.700 8.500-3-2-1.400 1.600-.3-2.800z" fill="#fff" /></Svg></Slot>
      <Slot $w={16}><Svg><path d="M6.500 0h3L13 12H3z" fill="#f28a1a" /><path d="M5.500 4h5l.8 2.500H4.700zM4 8.500h8l.7 2H3.300z" fill="#eee" /><path d="M1.500 11h13l1.500 5H0z" fill="#f08314" /></Svg></Slot>
      <Slot $w={18}><Up /></Slot>
      <Slot $w={22}><Emacs /></Slot>
      <Slot $w={20}><Firefox /></Slot>
      <Slot $w={14}><Up /></Slot>
      <Slot $w={22}><Svg><path d="M2 0h8.500L14 3.500V16H2z" fill="#f0f1f2" /><path d="M2 0h8.500v3.500H14V16h-1V5H9V1H3v15H2z" fill="#3b63a0" /><path d="M4.500 8h7M4.500 10.500h7M4.500 13h5" stroke="#6c7888" /></Svg></Slot>
      <Slot $w={12}><Up /></Slot>
      <Slot $w={24}><Svg><path d="M1 6.500h8L5.500 3.500h3L13 7M8 8 1 13" stroke="#f08a24" strokeWidth="2" /><circle cx="10.500" cy="10" r="5.300" fill="#f08a24" /><circle cx="10.500" cy="10" r="3.300" fill="#fff" /><circle cx="10.500" cy="10" r="1.900" fill="#2b69b0" /></Svg></Slot>
      <Slot $w={12}><Up /></Slot>
      <Slot $w={22}><Shutter /></Slot>
      <Slot $w={12}><Up /></Slot>
      <Slot $w={24}><Svg><circle cx="8" cy="8" r="5" stroke="#259785" strokeWidth="5" /><circle cx="8" cy="8" r="7" stroke="#259785" strokeWidth="2.500" strokeDasharray="3.500 3.800" /><path d="M8 9v7M5.500 4v3.500L8 9l2.500-1.500V4" stroke="#f0f2f2" strokeWidth="2.400" /></Svg></Slot>
      <Slot $w={10}><Up /></Slot>
      <Slot $w={30}><Svg><path d="M0 11l8-3.500 8 4-7.500 4.500z" fill="#28713d" /><path d="M6 6v6" stroke="#8b6541" strokeWidth="1.500" /><circle cx="5.500" cy="4" r="4" fill="#8fc34f" /></Svg></Slot>
      <Slot $w={12}><Svg><path d="M6.500 2.500 12 8l-5.500 5.500L0 8z" fill="#cdd0d2" /><path d="M9.500 2.500 16 8l-6.500 5.500L4 8z" fill="#dc3445" /></Svg></Slot>
      <Slot $w={22}><Up /></Slot>
      <Slot $w={18}><Svg><path d="M8 2.500l1.800 2.700 3.200-.4-1.200 3.200 1 3.500L9 10.800l-3.200 2-.5-3.300L2.800 7l3.200-1z" fill="#6d7071" stroke="#6d7071" strokeWidth="2.500" />{[[7.5, 1.5], [13.5, 4.5], [13, 12], [4.5, 14], [1.5, 6]].map(([x, y]) => <circle key={x} cx={x} cy={y} r="1.500" fill="#656be0" />)}</Svg></Slot>
      <Slot $w={28}><Svg><circle cx="8" cy="8" r="8" fill="#45b456" /><path d="M11.500 5A4.500 4.500 0 1 0 11.500 11M7 8h6M10.500 5.500 13 8l-2.500 2.500" stroke="#fff" strokeWidth="1.700" /></Svg></Slot>
      <Slot $w={18}><Svg><rect width="16" height="16" rx="2" fill="#e7e9e9" /><path d="M3 4h10M3 8h10M3 12h6" stroke="#303638" strokeWidth="1.700" /></Svg></Slot>
      <Slot $w={30}><Svg w={16} h={20} vb="0 0 16 20"><path d="M5 0h6v1.500h4V20H1V1.500h4z" fill="#d0d9d8" /><path d="M10 5 4 11h3l-1.500 5 6.500-7H8.500z" fill="#2d3536" /></Svg></Slot>
      <Slot $w={18}><Svg><path d="M12 4.500 6 11c-1.500 1.500-3-.2-1.800-1.500L10.500 3c2.500-2.500 5 .2 3 2.500L7 13c-3 3.300-7 0-4-3.500L9 3" stroke="#d2d8d8" strokeWidth="1.300" /></Svg></Slot>
      <Slot $w={30}><Svg><path d="M0 5C4.500 1 11.500 1 16 5l-8 10z" fill="#8b9293" /><path d="M2.500 6.500c3-2.300 8-2.300 11 0L8 14.500z" fill="#e6eaea" /></Svg></Slot>
      <Slot $w={18}><Svg><path d="M8 0l7 2.500C15 9.500 13 13.500 8 16 3 13.500 1 9.500 1 2.500z" fill="#e3e7e7" /><path d="M4.500 7.500 7.500 10.500l4.500-5" stroke="#333b3d" strokeWidth="1.600" /></Svg></Slot>
      <Slot $w={28}><Svg><path d="M4.500 4.500l7 7L8 15V1l3.500 3.500-7 7M2 1l12.500 14" stroke="#646a6b" strokeWidth="1.200" /></Svg></Slot>
      <Slot $w={18}><Svg><path d="M0 5.500h3L8 1v14l-5-4.500H0z" fill="#e1e5e5" /><path d="M10 5c2 1.500 2 4.500 0 6M11.500 2.500c4 3 4 8 0 11" stroke="#d0d6d6" strokeWidth="1.400" /></Svg></Slot>
      <Clock>seg 17 mai, 16:12</Clock>
      <Slot $w={24}><Rocket /></Slot><Slot $w={22}><Rocket /></Slot><Slot $w={24}><Rocket /></Slot><Slot $w={23}><Rocket /></Slot>
      <Desktop $w={40} $active><Firefox /></Desktop>
      <Desktop $w={42} />
    </Panel>
  );
}

export default function App() {
  return (
    <Screen>
      <Global />
      <Browser />
      <ConsoleHeader />
      <Viewport>
        <WizardPage />
        <PageScroll><PageThumb /></PageScroll>
        <KeyPairDialog />
      </Viewport>
      <ConsoleFooter />
      <DesktopPanel />
      <Pointer>
        <Svg w={20} h={20} vb="0 0 20 20"><path d="M9.500 1c1.200 0 1.800.9 1.900 2l.5 5 5 1.200c1.400.4 1.900 1.200 1.800 2.500l-.7 4.300-1 3H8L5.500 16l-4-3.500c-1-1-.3-2.300 1.200-2l4.800 2V3c0-1.200.8-2 2-2z" fill="#4b4f50" stroke="#fff" strokeWidth="1.100" /></Svg>
      </Pointer>
    </Screen>
  );
}
